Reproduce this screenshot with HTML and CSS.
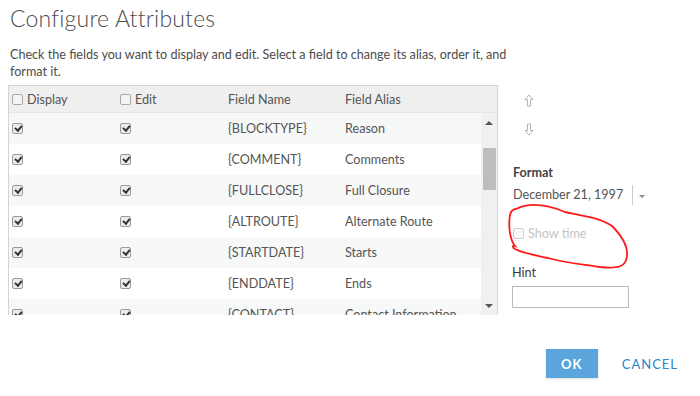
FILE: index.html
```html
<!DOCTYPE html>
<html>
<head>
<meta charset="utf-8">
<link rel="stylesheet" href="styles.css">
</head>
<body>
<div class="dialog">
  <h1 class="title">Configure Attributes</h1>
  <p class="desc">Check the fields you want to display and edit. Select a field to change its alias, order it, and format it.</p>
  <div class="main">
    <div class="grid">
      <div class="head">
        <div class="c1"><span class="cb"></span>Display</div>
        <div class="c2"><span class="cb"></span>Edit</div>
        <div class="c3">Field Name</div>
        <div class="c4">Field Alias</div>
        <div class="c5"></div>
      </div>
      <div class="body">
        <div class="rows">
          <div class="row alt"><div class="c1"><span class="cb on"></span></div><div class="c2"><span class="cb on"></span></div><div class="c3">{BLOCKTYPE}</div><div class="c4">Reason</div></div>
          <div class="row"><div class="c1"><span class="cb on"></span></div><div class="c2"><span class="cb on"></span></div><div class="c3">{COMMENT}</div><div class="c4">Comments</div></div>
          <div class="row alt"><div class="c1"><span class="cb on"></span></div><div class="c2"><span class="cb on"></span></div><div class="c3">{FULLCLOSE}</div><div class="c4">Full Closure</div></div>
          <div class="row"><div class="c1"><span class="cb on"></span></div><div class="c2"><span class="cb on"></span></div><div class="c3">{ALTROUTE}</div><div class="c4">Alternate Route</div></div>
          <div class="row alt"><div class="c1"><span class="cb on"></span></div><div class="c2"><span class="cb on"></span></div><div class="c3">{STARTDATE}</div><div class="c4">Starts</div></div>
          <div class="row"><div class="c1"><span class="cb on"></span></div><div class="c2"><span class="cb on"></span></div><div class="c3">{ENDDATE}</div><div class="c4">Ends</div></div>
          <div class="row alt"><div class="c1"><span class="cb on"></span></div><div class="c2"><span class="cb on"></span></div><div class="c3">{CONTACT}</div><div class="c4">Contact Information</div></div>
        </div>
        <div class="scrollbar">
          <span class="arrow up"></span>
          <span class="thumb"></span>
          <span class="spacer"></span>
          <span class="arrow down"></span>
        </div>
      </div>
    </div>
    <div class="side">
      <div class="movers">
        <svg width="10" height="13" viewBox="0 0 10 13"><path d="M5 1 L9 5.5 L6.5 5.5 L6.5 12 L3.5 12 L3.5 5.5 L1 5.5 Z" fill="none" stroke="#b5b5b5" stroke-width="1"/></svg>
        <svg width="10" height="13" viewBox="0 0 10 13"><path d="M5 12 L9 7.5 L6.5 7.5 L6.5 1 L3.5 1 L3.5 7.5 L1 7.5 Z" fill="none" stroke="#b5b5b5" stroke-width="1"/></svg>
      </div>
      <div class="label fmt">Format</div>
      <div class="select"><span class="val">December 21, 1997</span><span class="caret"></span></div>
      <div class="showtime"><span class="cb dis"></span>Show time</div>
      <div class="label hint">Hint</div>
      <div class="input"></div>
    </div>
  </div>
  <div class="footer">
    <button class="ok">OK</button>
    <button class="cancel">CANCEL</button>
  </div>
  <svg class="scribble" width="700" height="396" viewBox="0 0 700 396"><path d="M516 209 C530 202 548 205 565 212 C585 216 600 218 612 226 C622 236 628 246 627 256 C626 266 620 269 600 267 C580 264 565 263 548 258 C535 255 522 253 515 249 C512 247 512 245 515 246 C510 240 508 226 510 215 C511 211 513 209 516 209" fill="none" stroke="#ff1a1a" stroke-width="1.8" stroke-linecap="round"/></svg>
</div>
</body>
</html>
```
FILE: styles.css
```css
html, body { margin: 0; padding: 0; background: #fff; }
body { font-family: Lato, "Open Sans", sans-serif; color: #555; width: 700px; height: 396px; overflow: hidden; }
.dialog { position: relative; padding: 0 0 0 8px; height: 396px; box-sizing: border-box; }
.title { margin: 0; padding: 4px 0 0 2px; font-size: 23px; font-weight: 300; color: #4c4c4c; line-height: 28px; letter-spacing: 0.2px; }
.desc { margin: 14px 0 0 2px; font-size: 12.6px; line-height: 17px; width: 530px; color: #4c4c4c; }
.main { display: flex; margin-top: 5px; }
.grid { width: 488px; height: 229px; border: 1px solid #d4d4d4; border-bottom: none; overflow: hidden; font-size: 12.6px; }
.head { display: flex; height: 26px; align-items: center; background: #efefef; border-bottom: 1px solid #e6e6e6; }
.body { display: flex; height: 202px; }
.rows { flex: 1; }
.row { display: flex; height: 31px; align-items: center; background: #fff; }
.row.alt { background: #f7f8f8; }
.c1 { width: 108px; padding-left: 3px; display: flex; align-items: center; }
.c2 { width: 108px; display: flex; align-items: center; }
.c3 { width: 117px; }
.c4 { flex: 1; white-space: nowrap; }
.head .c1, .head .c2 { gap: 4px; }
.cb { display: inline-block; width: 9px; height: 9px; border: 1px solid #a9a9a9; border-radius: 2px; background: #f4f4f4; box-sizing: content-box; position: relative; }
.cb.on { background: #ececec; border-color: #9a9a9a; }
.cb.on::after { content: ""; position: absolute; left: 3px; top: 0px; width: 2.5px; height: 5px; border-right: 2px solid #333; border-bottom: 2px solid #333; transform: rotate(40deg); }
.cb.dis { border-color: #d0d0d0; background: #fafafa; }
.scrollbar { width: 16px; background: #f0f0f0; display: flex; flex-direction: column; align-items: center; }
.arrow { width: 0; height: 0; border-left: 4px solid transparent; border-right: 4px solid transparent; margin: 6px 0; }
.arrow.up { border-bottom: 4px solid #555; margin-top: 8px; }
.arrow.down { border-top: 4px solid #555; margin-bottom: 7px; }
.thumb { width: 13px; height: 42px; background: #bdbdbd; margin-top: 17px; }
.spacer { flex: 1; }
.side { margin-left: 15px; width: 170px; display: flex; flex-direction: column; font-size: 12.6px; }
.movers { display: flex; flex-direction: column; gap: 16px; padding: 9px 0 0 11px; }
.label { color: #3a3a3a; }
.fmt { margin-top: 29px; font-weight: 700; color: #444; font-size: 12.6px; }
.select { display: flex; align-items: center; margin-top: 5px; height: 20px; width: 136px; }
.val { width: 119px; border-right: 1px solid #ccc; height: 20px; line-height: 20px; }
.caret { width: 0; height: 0; border-left: 3.5px solid transparent; border-right: 3.5px solid transparent; border-top: 3.5px solid #888; margin-left: 6px; margin-top: 2px; }
.showtime { display: flex; align-items: center; gap: 4px; margin-top: 21px; color: #c4c4c4; }
.hint { margin-top: 24px; margin-left: -1px; }
.input { margin-top: 6px; margin-left: -1px; width: 115px; height: 20px; border: 1px solid #bbb; }
.footer { display: flex; align-items: center; justify-content: flex-end; gap: 24px; padding-right: 22px; margin-top: 34px; }
button { font-family: Lato, sans-serif; border: none; cursor: pointer; }
.ok { width: 52px; height: 29px; background: #5aa5dc; color: #fff; font-size: 13px; font-weight: 700; letter-spacing: 1px; box-shadow: 0 1px 2px rgba(0,0,0,0.15); }
.cancel { background: none; color: #2d83c8; font-size: 13px; letter-spacing: 1px; padding: 0; }
.scribble { position: absolute; left: 0; top: 0; pointer-events: none; }
```
